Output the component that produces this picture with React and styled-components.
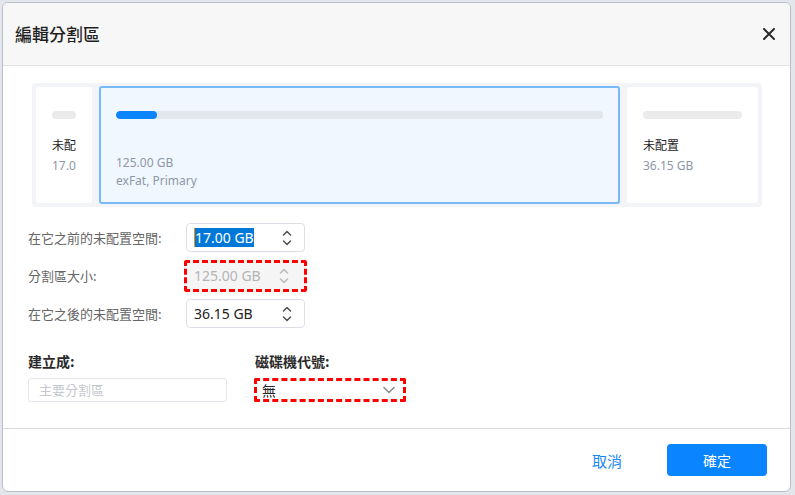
import React from "react";
import styled, { createGlobalStyle, css } from "styled-components";

const Global = createGlobalStyle`
  html, body { margin: 0; padding: 0; }
  body {
    background: #e3e6ea;
    font-family: "Noto Sans", "Noto Sans CJK TC", sans-serif;
    width: 795px; height: 495px; overflow: hidden;
  }
`;

const Page = styled.div`
  padding: 2px 0 0 2px;
`;

const Dialog = styled.div`
  width: 787px;
  height: 488px;
  border: 1px solid #b9bec7;
  border-radius: 6px;
  background: #fff;
  overflow: hidden;
  display: flex;
  flex-direction: column;
`;

const Header = styled.div`
  height: 62px;
  flex: none;
  background: #f7f7f7;
  border-bottom: 1px solid #e3e3e3;
  display: flex;
  align-items: center;
  justify-content: space-between;
  padding: 0 14px 0 12px;
`;

const Title = styled.h1`
  margin: 0;
  font-family: "Noto Sans CJK TC", sans-serif;
  font-size: 17px;
  font-weight: 500;
  color: #1f1f1f;
  line-height: 24px;
`;

const Close = styled.button`
  border: 0;
  background: none;
  padding: 0;
  width: 14px;
  height: 14px;
  display: flex;
  align-items: center;
  justify-content: center;
  cursor: pointer;
`;

const Main = styled.div`
  flex: 1;
  padding: 17px 28px 0 29px;
`;

const Strip = styled.div`
  height: 124px;
  box-sizing: border-box;
  background: #f2f4f7;
  border-radius: 4px;
  padding: 4px;
  display: flex;
  gap: 7px;
`;

const Card = styled.div`
  box-sizing: border-box;
  width: ${(p) => p.$w}px;
  flex: none;
  background: #fff;
  border-radius: 3px;
  padding: 24px 16px 0;
  overflow: hidden;
  ${(p) =>
    p.$selected &&
    css`
      background: #f0f7ff;
      border: 2px solid #7ab9f7;
      margin: -1px 0;
      padding: 23px 15px 0;
    `}
`;

const Bar = styled.div`
  height: 8px;
  border-radius: 4px;
  background: ${(p) => (p.$track ? "#e1e5ec" : "#ebebeb")};
  overflow: hidden;
`;

const Fill = styled.div`
  height: 100%;
  background: #0a84ff;
  border-radius: 4px;
`;

const CardName = styled.div`
  margin-top: 18px;
  font-size: 12px;
  line-height: 16px;
  color: #222;
  white-space: nowrap;
  overflow: hidden;
  font-family: "Noto Sans CJK TC", sans-serif;
`;

const CardInfo = styled.div`
  margin-top: ${(p) => p.$mt ?? 4}px;
  font-size: 12px;
  line-height: 18px;
  height: 18px;
  color: #8e97a6;
  white-space: nowrap;
  overflow: hidden;
`;

const Form = styled.div`
  margin-top: 16px;
  margin-left: -4px;
  display: flex;
  flex-direction: column;
  gap: 9px;
`;

const Row = styled.div`
  display: flex;
  align-items: center;
  height: 29px;
`;

const Label = styled.label`
  width: 158px;
  flex: none;
  font-size: 13px;
  color: #666;
  font-family: "Noto Sans CJK TC", sans-serif;
`;

const Spin = styled.div`
  box-sizing: border-box;
  width: 119px;
  height: 29px;
  border: 1px solid #dcdfe5;
  border-radius: 4px;
  display: flex;
  align-items: center;
  justify-content: space-between;
  padding: 0 12px 0 7px;
  font-size: 14px;
  color: #222;
  background: #fff;
  ${(p) =>
    p.$disabled &&
    css`
      background: #f5f5f5;
      color: #b4b4b4;
      border: 3px dashed #f00;
      width: 123px;
      height: 32px;
      margin: 0 0 0 -2px;
      padding: 0 15px 0 7px;
      border-radius: 2px;
    `}
`;

const Selected = styled.span`
  background: #0078d7;
  color: #fff;
  border-left: 1px solid #ff8c00;
  line-height: 19px;
`;

const Arrows = styled.svg`
  flex: none;
`;

const Bottom = styled.div`
  margin-top: 23px;
  margin-left: -4px;
  display: flex;
  gap: 28px;
`;

const Col = styled.div`
  width: ${(p) => p.$w}px;
  display: flex;
  flex-direction: column;
  gap: 7px;
`;

const BoldLabel = styled.div`
  font-size: 14px;
  font-weight: 700;
  color: #2a2a2a;
  line-height: 20px;
  font-family: "Noto Sans CJK TC", sans-serif;
`;

const TextInput = styled.div`
  box-sizing: border-box;
  height: 24px;
  border: 1px solid #e4e7ec;
  border-radius: 3px;
  padding: 0 10px;
  font-size: 13px;
  line-height: 22px;
  color: #c4c7cd;
  font-family: "Noto Sans CJK TC", sans-serif;
`;

const Select = styled.div`
  box-sizing: border-box;
  height: 24px;
  margin-left: -1px;
  border: 3px dashed #f00;
  border-radius: 2px;
  display: flex;
  align-items: center;
  justify-content: space-between;
  padding: 0 8px 0 5px;
  font-size: 14px;
  color: #222;
  font-family: "Noto Sans CJK TC", sans-serif;
`;

const Footer = styled.div`
  height: 62px;
  flex: none;
  border-top: 1px solid #dcdcdc;
  display: flex;
  align-items: center;
  justify-content: flex-end;
  padding-right: 23px;
  gap: 45px;
`;

const TextButton = styled.button`
  border: 0;
  background: none;
  padding: 0;
  font-size: 15px;
  color: #1a87f0;
  font-family: "Noto Sans CJK TC", sans-serif;
  cursor: pointer;
`;

const Primary = styled.button`
  width: 100px;
  height: 32px;
  border: 0;
  border-radius: 4px;
  background: #0a84ff;
  color: #fff;
  font-size: 14px;
  font-family: "Noto Sans CJK TC", sans-serif;
  cursor: pointer;
`;

const SpinArrows = ({ color = "#555" }) => (
  <Arrows width="10" height="18" viewBox="0 0 10 18">
    <path d="M1.5 6 L5 2.5 L8.5 6" fill="none" stroke={color} strokeWidth="1.6" strokeLinecap="round" strokeLinejoin="round" />
    <path d="M1.5 12 L5 15.5 L8.5 12" fill="none" stroke={color} strokeWidth="1.6" strokeLinecap="round" strokeLinejoin="round" />
  </Arrows>
);

export default function App() {
  return (
    <>
      <Global />
      <Page>
        <Dialog>
          <Header>
            <Title>編輯分割區</Title>
            <Close aria-label="close">
              <svg width="12" height="12" viewBox="0 0 12 12">
                <path d="M1 1 L11 11 M11 1 L1 11" stroke="#2b2b2b" strokeWidth="2" strokeLinecap="round" />
              </svg>
            </Close>
          </Header>
          <Main>
            <Strip>
              <Card $w={56}>
                <Bar />
                <CardName>未配置</CardName>
                <CardInfo>17.00 GB</CardInfo>
              </Card>
              <Card $w={521} $selected>
                <Bar $track>
                  <Fill style={{ width: "8.5%" }} />
                </Bar>
                <CardInfo $mt={35}>125.00 GB</CardInfo>
                <CardInfo $mt={0}>exFat, Primary</CardInfo>
              </Card>
              <Card $w={131}>
                <Bar />
                <CardName>未配置</CardName>
                <CardInfo>36.15 GB</CardInfo>
              </Card>
            </Strip>

            <Form>
              <Row>
                <Label>在它之前的未配置空間:</Label>
                <Spin>
                  <Selected>17.00 GB</Selected>
                  <SpinArrows />
                </Spin>
              </Row>
              <Row>
                <Label>分割區大小:</Label>
                <Spin $disabled>
                  <span>125.00 GB</span>
                  <SpinArrows color="#bcbcbc" />
                </Spin>
              </Row>
              <Row>
                <Label>在它之後的未配置空間:</Label>
                <Spin>
                  <span>36.15 GB</span>
                  <SpinArrows />
                </Spin>
              </Row>
            </Form>

            <Bottom>
              <Col $w={199}>
                <BoldLabel>建立成:</BoldLabel>
                <TextInput>主要分割區</TextInput>
              </Col>
              <Col $w={151}>
                <BoldLabel>磁碟機代號:</BoldLabel>
                <Select>
                  <span>無</span>
                  <svg width="12" height="8" viewBox="0 0 12 8">
                    <path d="M1 1.5 L6 6.5 L11 1.5" fill="none" stroke="#8a8a8a" strokeWidth="1.5" strokeLinecap="round" strokeLinejoin="round" />
                  </svg>
                </Select>
              </Col>
            </Bottom>
          </Main>
          <Footer>
            <TextButton>取消</TextButton>
            <Primary>確定</Primary>
          </Footer>
        </Dialog>
      </Page>
    </>
  );
}
